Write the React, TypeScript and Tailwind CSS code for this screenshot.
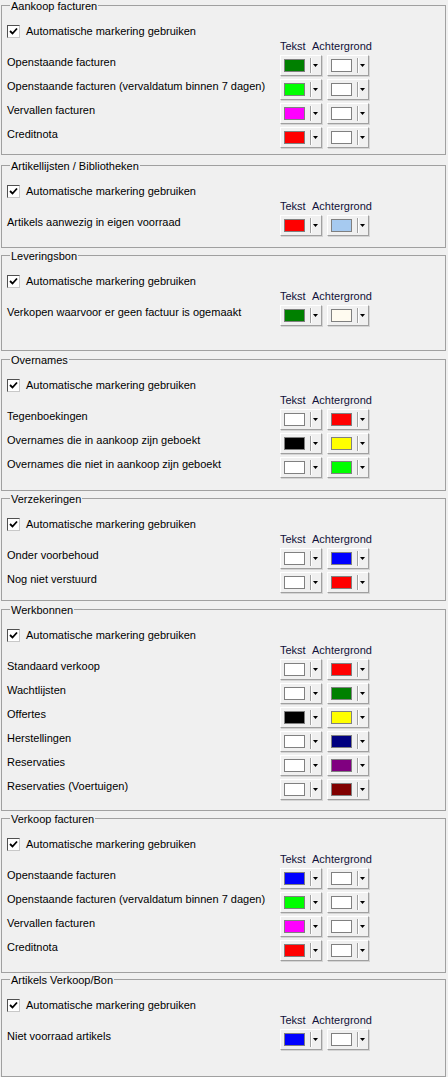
import React from "react";

type Row = { label: string; fg: string; bg: string };
type Group = { title: string; rows: Row[]; box: string };

const groups: Group[] = [
  {
    title: "Aankoop facturen",
    box: "-mt-px pb-[6px]",
    rows: [
      { label: "Openstaande facturen", fg: "bg-[#008000]", bg: "bg-white" },
      { label: "Openstaande facturen (vervaldatum binnen 7 dagen)", fg: "bg-[#00ff00]", bg: "bg-white" },
      { label: "Vervallen facturen", fg: "bg-[#ff00ff]", bg: "bg-white" },
      { label: "Creditnota", fg: "bg-[#ff0000]", bg: "bg-white" },
    ],
  },
  {
    title: "Artikellijsten / Bibliotheken",
    box: "mt-[4px] pb-[11px]",
    rows: [{ label: "Artikels aanwezig in eigen voorraad", fg: "bg-[#ff0000]", bg: "bg-[#a6caf0]" }],
  },
  {
    title: "Leveringsbon",
    box: "mt-[1px] pb-[24px]",
    rows: [{ label: "Verkopen waarvoor er geen factuur is ogemaakt", fg: "bg-[#008000]", bg: "bg-[#fffbf0]" }],
  },
  {
    title: "Overnames",
    box: "mt-[2px] pb-[12px]",
    rows: [
      { label: "Tegenboekingen", fg: "bg-white", bg: "bg-[#ff0000]" },
      { label: "Overnames die in aankoop zijn geboekt", fg: "bg-black", bg: "bg-[#ffff00]" },
      { label: "Overnames die niet in aankoop zijn geboekt", fg: "bg-white", bg: "bg-[#00ff00]" },
    ],
  },
  {
    title: "Verzekeringen",
    box: "mt-[1px] pb-[7px]",
    rows: [
      { label: "Onder voorbehoud", fg: "bg-white", bg: "bg-[#0000ff]" },
      { label: "Nog niet verstuurd", fg: "bg-white", bg: "bg-[#ff0000]" },
    ],
  },
  {
    title: "Werkbonnen",
    box: "mt-[2px] pb-[10px]",
    rows: [
      { label: "Standaard verkoop", fg: "bg-white", bg: "bg-[#ff0000]" },
      { label: "Wachtlijsten", fg: "bg-white", bg: "bg-[#008000]" },
      { label: "Offertes", fg: "bg-black", bg: "bg-[#ffff00]" },
      { label: "Herstellingen", fg: "bg-white", bg: "bg-[#000080]" },
      { label: "Reservaties", fg: "bg-white", bg: "bg-[#800080]" },
      { label: "Reservaties (Voertuigen)", fg: "bg-white", bg: "bg-[#800000]" },
    ],
  },
  {
    title: "Verkoop facturen",
    box: "mt-[1px] pb-[11px]",
    rows: [
      { label: "Openstaande facturen", fg: "bg-[#0000ff]", bg: "bg-white" },
      { label: "Openstaande facturen (vervaldatum binnen 7 dagen)", fg: "bg-[#00ff00]", bg: "bg-white" },
      { label: "Vervallen facturen", fg: "bg-[#ff00ff]", bg: "bg-white" },
      { label: "Creditnota", fg: "bg-[#ff0000]", bg: "bg-white" },
    ],
  },
  {
    title: "Artikels Verkoop/Bon",
    box: "mt-0 pb-[26px]",
    rows: [{ label: "Niet voorraad artikels", fg: "bg-[#0000ff]", bg: "bg-white" }],
  },
];

function ColorButton({ c }: { c: string }) {
  return (
    <div className="flex h-[21px] w-[42px] items-center border border-t-white border-l-white border-b-[#a0a0a0] border-r-[#a0a0a0] bg-[#f0f0f0] pl-[3px] shadow-[1px_1px_0_#d4d4d4]">
      <div className={"h-[13px] w-[21px] border border-[#808080] " + c} />
      <div className="ml-[5px] h-[15px] w-[2px] border-l border-r border-l-[#a0a0a0] border-r-white" />
      <svg className="ml-[1px]" width="5" height="3" viewBox="0 0 5 3">
        <polygon points="0,0 5,0 2.5,3" fill="#000" />
      </svg>
    </div>
  );
}

function CheckBox() {
  return (
    <div className="flex h-[13px] w-[13px] items-center justify-center border border-t-[#505050] border-l-[#505050] border-b-[#c8c8c8] border-r-[#c8c8c8] bg-white">
      <svg width="9" height="9" viewBox="0 0 9 9">
        <path d="M1 4 L3.5 6.5 L8 1.5" stroke="#000" strokeWidth="1.8" fill="none" />
      </svg>
    </div>
  );
}

function GroupBox({ g }: { g: Group }) {
  return (
    <fieldset className={"ml-[1px] w-[445px] border border-[#a0a0a0] pl-[5px] " + g.box}>
      <legend className="ml-[3px] px-[1px] pt-[2px] text-[11px] leading-[10px] text-black">{g.title}</legend>
      <div className="mt-[14px] flex h-[13px] items-center">
        <CheckBox />
        <span className="ml-[6px] text-[11px] leading-[13px] text-black">Automatische markering gebruiken</span>
      </div>
      <div className="mt-[1px] flex h-[14px] items-center pl-[273px] text-[11px] leading-[14px] text-[#10103a]">
        <span className="w-[32px]">Tekst</span>
        <span>Achtergrond</span>
      </div>
      <div className="mt-[2px] flex flex-col gap-[3px]">
        {g.rows.map((r, i) => (
          <div key={i} className="flex h-[21px] items-start">
            <span className="w-[273px] pt-[1px] text-[11px] leading-[13px] text-black">{r.label}</span>
            <ColorButton c={r.fg} />
            <div className="w-[5px]" />
            <ColorButton c={r.bg} />
          </div>
        ))}
      </div>
    </fieldset>
  );
}

export default function App() {
  return (
    <div
      className="min-h-screen w-[448px] bg-[#f0f0f0] pt-0"
      style={{ fontFamily: '"Liberation Sans", Arial, sans-serif' }}
    >
      {groups.map((g, i) => (
        <GroupBox key={i} g={g} />
      ))}
    </div>
  );
}
